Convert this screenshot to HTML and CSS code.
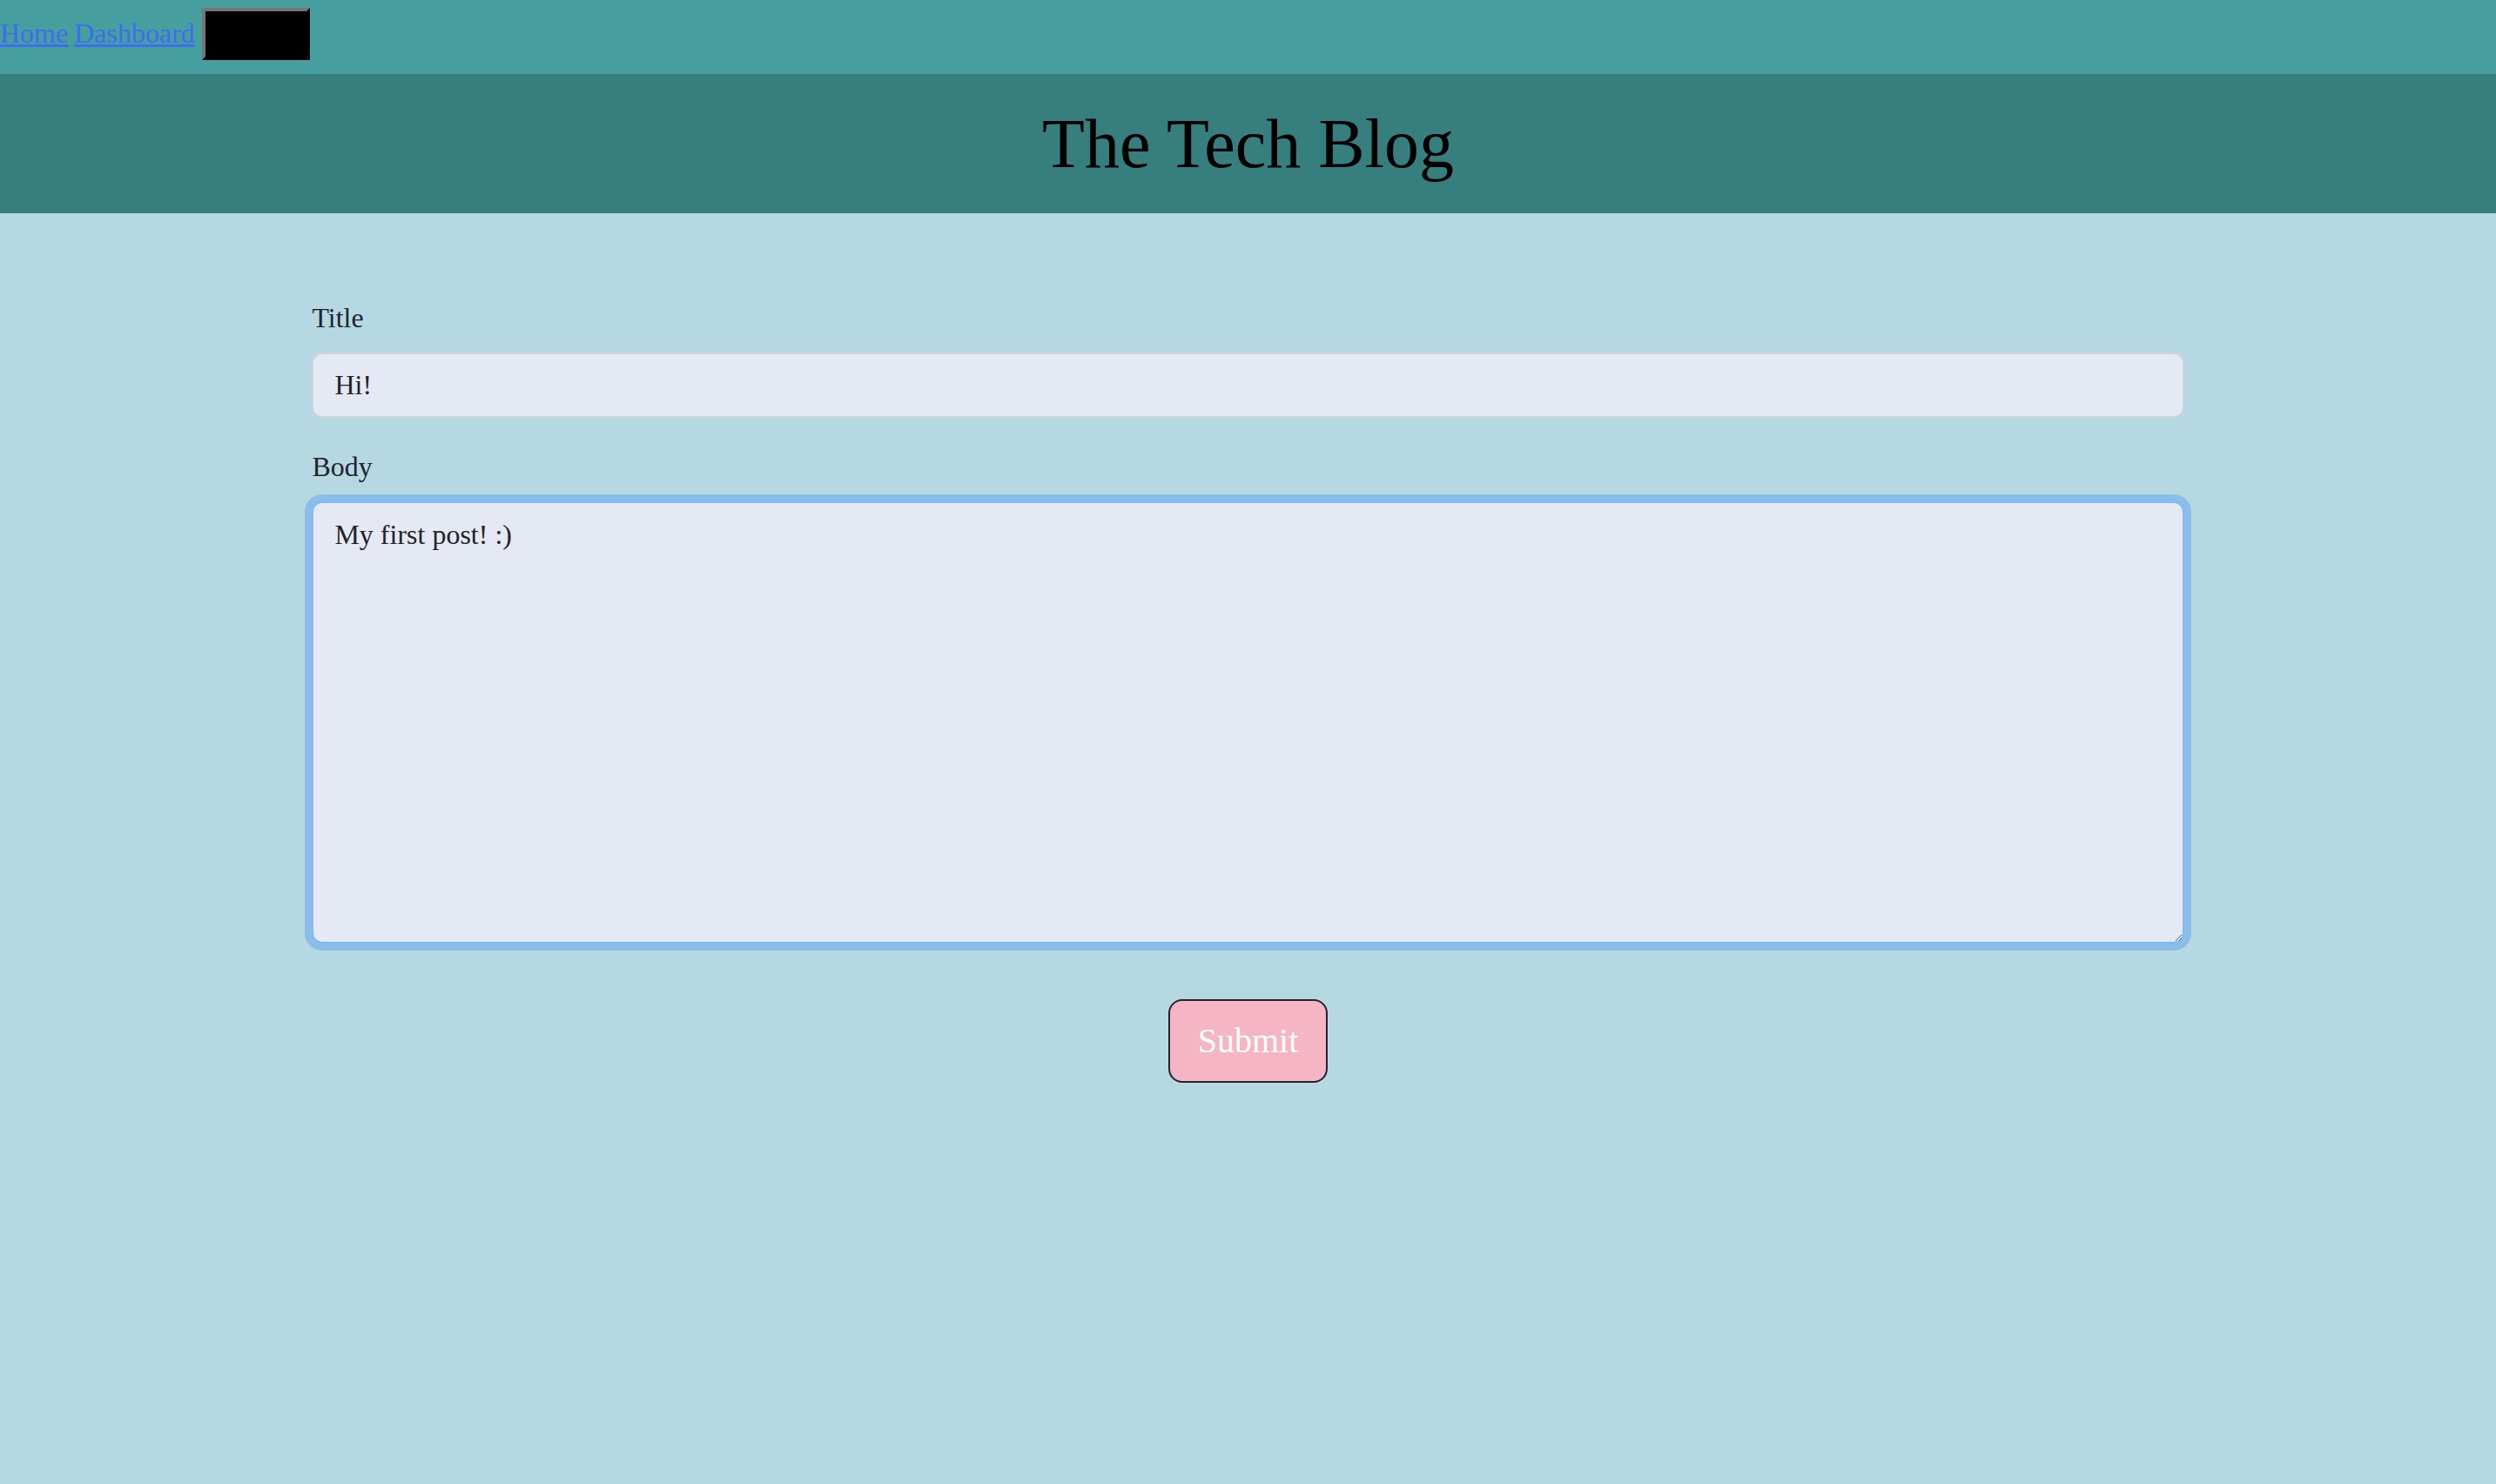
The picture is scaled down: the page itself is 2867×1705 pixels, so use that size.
FILE: index.html
```html
<!DOCTYPE html>
<html lang="en">
<head>
<meta charset="utf-8">
<title>The Tech Blog</title>
<link rel="stylesheet" href="styles.css">
</head>
<body>
<nav class="topnav">
  <a class="navlink" href="#">Home</a>
  <a class="navlink" href="#">Dashboard</a>
  <button class="logout" type="button">Logout</button>
</nav>
<header class="banner">
  <h1 class="banner-title">The Tech Blog</h1>
</header>
<main class="content">
  <form class="post-form">
    <div class="field">
      <label class="field-label" for="title">Title</label>
      <input class="field-input" id="title" type="text" value="Hi!">
    </div>
    <div class="field">
      <label class="field-label" for="body">Body</label>
      <textarea class="field-input field-area" id="body" rows="10">My first post! :)</textarea>
    </div>
    <div class="actions">
      <button class="submit" type="submit">Submit</button>
    </div>
  </form>
</main>
</body>
</html>
```

FILE: styles.css
```css
html, body {
  margin: 0;
  padding: 0;
}

body {
  background: #b5d8e3;
  font-family: "Liberation Serif", "Times New Roman", serif;
  color: #212529;
}

.topnav {
  box-sizing: border-box;
  height: 85px;
  background: #469e9e;
  display: flex;
  align-items: baseline;
  gap: 7px;
  padding-top: 9px;
  font-size: 32px;
}

.navlink {
  color: #3d6ef2;
  text-decoration: underline;
  line-height: normal;
}

.logout {
  font-family: "Liberation Serif", "Times New Roman", serif;
  font-size: 32px;
  line-height: normal;
  color: #000;
  background: #000;
  border: 4px outset #767676;
  border-color: #767676 #222 #222 #767676;
  padding: 7px 12px 8px;
  margin-left: 1px;
}

.banner {
  height: 160px;
  background: #377f7e;
  display: flex;
  align-items: center;
  justify-content: center;
}

.banner-title {
  margin: 0;
  font-size: 80px;
  font-weight: normal;
  line-height: normal;
  color: #000;
}

.content {
  width: 75%;
  margin: 96px auto 0;
}

.field {
  margin-bottom: 32px;
}

.field-label {
  display: block;
  font-size: 32px;
  line-height: 48px;
  margin-bottom: 16px;
}

.field-input {
  display: block;
  box-sizing: border-box;
  width: 100%;
  margin: 0;
  font-family: "Liberation Serif", "Times New Roman", serif;
  font-size: 32px;
  line-height: 48px;
  color: #212529;
  background: #e5e9f4;
  border: 2px solid #ced4da;
  border-radius: 12px;
  padding: 11px 24px 12px;
  outline: none;
}

.field-area {
  padding: 12px 24px;
  border-color: #86b7fe;
  box-shadow: 0 0 0 8px rgba(13, 110, 253, 0.25);
  resize: vertical;
}

.actions {
  display: flex;
  justify-content: center;
  padding-top: 32px;
}

.submit {
  font-family: "Liberation Serif", "Times New Roman", serif;
  font-size: 40px;
  line-height: 60px;
  color: #fff;
  background: #f5b5c5;
  border: 2px solid #212529;
  border-radius: 16px;
  padding: 16px 32px;
}
```
